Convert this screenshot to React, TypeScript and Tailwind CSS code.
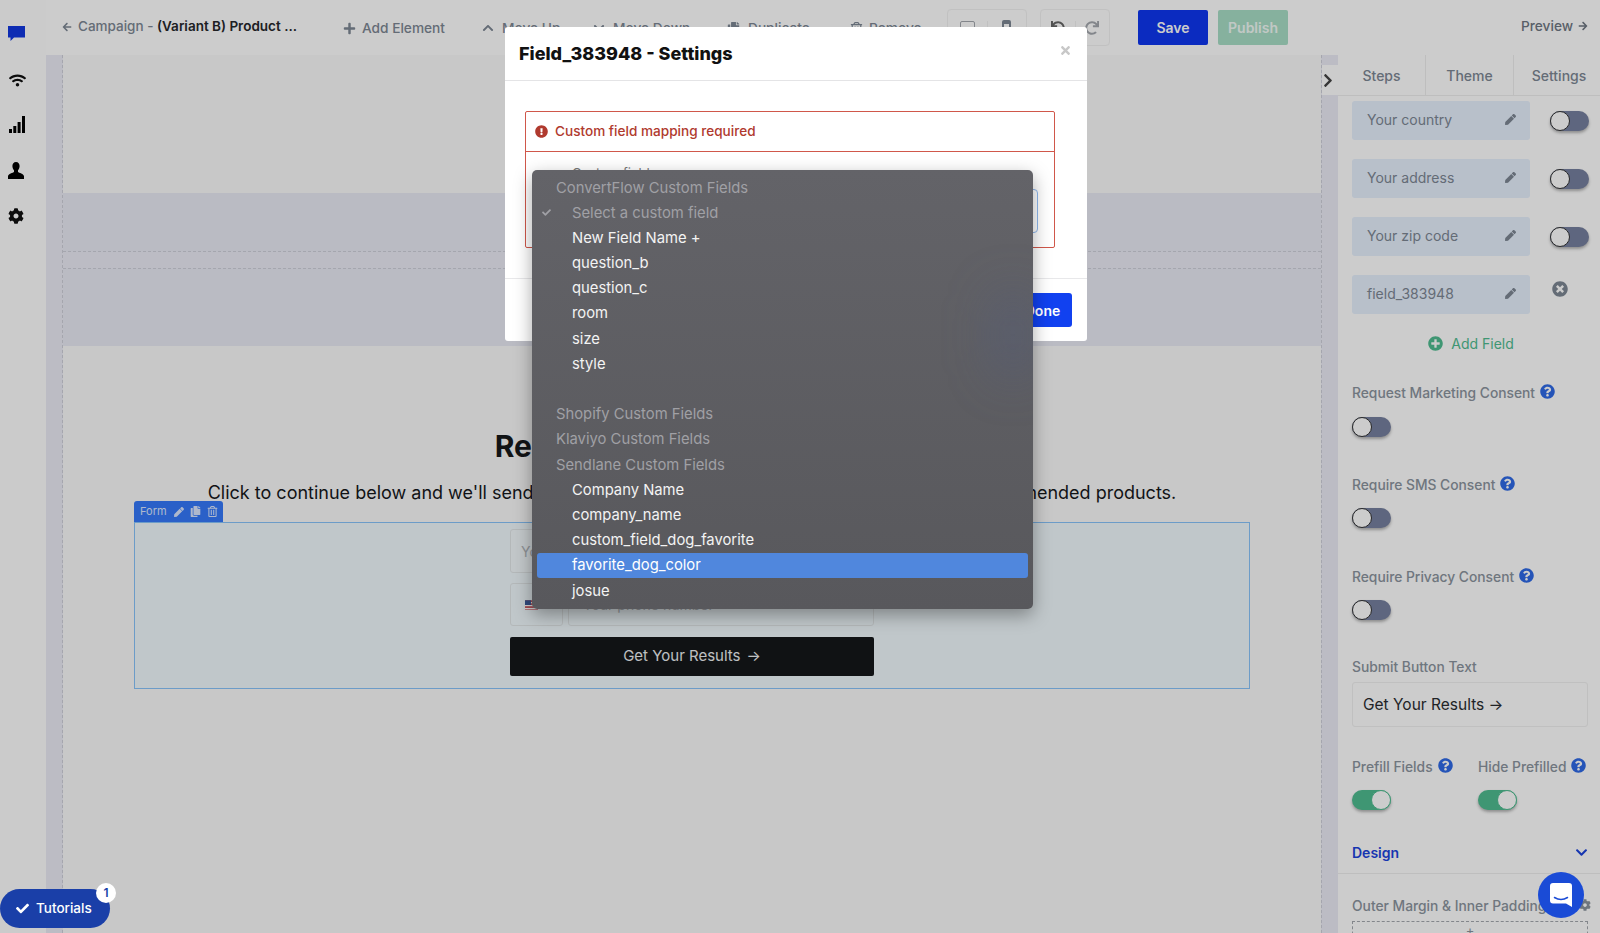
import {
  FaArrowLeft,
  FaArrowRight,
  FaCheck,
  FaChevronDown,
  FaChevronRight,
  FaChevronUp,
  FaCog,
  FaCopy,
  FaExclamationCircle,
  FaPen,
  FaPlus,
  FaPlusCircle,
  FaQuestionCircle,
  FaRedo,
  FaRegTrashAlt,
  FaTimes,
  FaTimesCircle,
  FaUndo,
  FaWifi,
} from "react-icons/fa";

const FIELDS = ["Your country", "Your address", "Your zip code", "field_383948"];

function Toggle({ on = false }: { on?: boolean }) {
  return (
    <div
      className={`relative h-5 w-[39px] shrink-0 rounded-full shadow-[0_2px_3px_rgba(0,0,0,0.3)] ${
        on ? "bg-[#4fbc90]" : "bg-[#76809f]"
      }`}
    >
      <div
        className={`absolute top-0 h-5 w-5 rounded-full bg-white ${
          on ? "right-0 border border-[#4fbc90]" : "left-0 border border-[#333]"
        }`}
      />
    </div>
  );
}

function Label({ children, help = false }: { children: React.ReactNode; help?: boolean }) {
  return (
    <div className="flex h-5 items-center whitespace-nowrap text-[13.8px] font-medium leading-5 text-[#8b949e]">
      {children}
      {help && <FaQuestionCircle className="mb-[3px] ml-[5px] shrink-0 text-[15px] text-[#2f6ae6]" />}
    </div>
  );
}

function Sidebar() {
  return (
    <div className="flex w-[46px] shrink-0 flex-col bg-[#fefefe] pl-2 pt-[26px] text-[#111]">
      <svg width="17" height="16" viewBox="0 0 17 16">
        <path d="M0 0h17v11.5H6L2.5 15v-3.5H0z" fill="#1238e0" />
      </svg>
      <FaWifi className="ml-[1px] mt-[30px] text-[17px]" />
      <svg className="ml-[1px] mt-[27px]" width="16" height="17" viewBox="0 0 16 17">
        <rect x="0" y="13" width="3" height="4" />
        <rect x="4.3" y="10" width="3" height="7" />
        <rect x="8.6" y="6" width="3" height="11" />
        <rect x="13" y="0" width="3" height="17" />
      </svg>
      <svg className="mt-[29px]" width="16" height="17" viewBox="0 0 16 17">
        <path d="M8 0c2.3 0 3.6 1.8 3.6 4 0 1.8-.8 3.4-1.6 4.3v1.6c.8.8 6 1.7 6 4.3V17H0v-2.800c0-2.600 5.200-3.500 6-4.300V8.300C5.200 7.400 4.400 5.800 4.400 4 4.400 1.800 5.700 0 8 0z" />
      </svg>
      <FaCog className="mt-[29px] text-[16px]" />
    </div>
  );
}

function TopBar() {
  return (
    <div className="flex h-[55px] shrink-0 items-center whitespace-nowrap bg-white pl-4 text-[13.7px] font-medium text-[#7d8794]">
      <div className="flex w-[234px] shrink-0 items-center pb-[2px] text-[13.5px] text-[#7d8794]">
        <FaArrowLeft className="mr-[6px] shrink-0 text-[10px]" />
        Campaign -&nbsp;<span className="font-semibold text-[#26272b]">(Variant B) Product ...</span>
      </div>
      <div className="ml-[47px] flex w-[139px] shrink-0 items-center gap-[6px] pt-[2px]">
        <FaPlus className="text-[13px]" />
        Add Element
      </div>
      <div className="flex w-[111px] shrink-0 items-center gap-2 pt-[2px]">
        <FaChevronUp className="text-[12px]" />
        Move Up
      </div>
      <div className="flex w-[134px] shrink-0 items-center gap-2 pt-[2px]">
        <FaChevronDown className="text-[12px]" />
        Move Down
      </div>
      <div className="flex w-[123px] shrink-0 items-center gap-2 pt-[2px]">
        <FaCopy className="text-[13px]" />
        Duplicate
      </div>
      <div className="flex w-[97px] shrink-0 items-center gap-[6px] pt-[2px]">
        <FaRegTrashAlt className="text-[13px]" />
        Remove
      </div>
      <div className="flex h-[37px] w-[80px] shrink-0 items-center rounded border border-[#f2f2f2]">
        <div className="flex flex-1 justify-center border-r border-[#f2f2f2]">
          <div className="h-[13px] w-[15px] rounded-[2px] border border-[#a4a8ae]" />
        </div>
        <div className="flex flex-1 justify-center">
          <div className="h-[16px] w-[9px] rounded-[2px] border-2 border-t-4 border-[#7d8794]" />
        </div>
      </div>
      <div className="ml-[13px] flex h-[37px] w-[70px] shrink-0 items-center rounded border border-[#f2f2f2]">
        <div className="flex flex-1 justify-center border-r border-[#f2f2f2] text-[14px] text-[#666]">
          <FaUndo />
        </div>
        <div className="flex flex-1 justify-center text-[14px] text-[#a4a8ae]">
          <FaRedo />
        </div>
      </div>
      <button className="ml-[28px] h-[35px] w-[70px] shrink-0 rounded-[2px] bg-[#0e36f0] text-[14px] font-semibold text-white">
        Save
      </button>
      <button className="ml-[10px] h-[35px] w-[70px] shrink-0 rounded-[2px] bg-[#a8dec6] text-[14px] font-semibold text-[#f2fbf7]">
        Publish
      </button>
      <div className="ml-[233px] flex shrink-0 items-center gap-[5px] pb-[2px] text-[#6f7782]">
        Preview
        <FaArrowRight className="text-[10px]" />
      </div>
    </div>
  );
}

function FormBlock() {
  return (
    <div className="relative mx-[71px] mt-5 flex h-[167px] flex-col items-center border border-[#88c3fb] bg-[#f0f9fd] pt-[6px]">
      <div className="absolute -left-px -top-[22px] flex h-[21px] w-[89px] items-center gap-[7px] rounded-t-[3px] bg-[#3579fb] pl-[6px] text-[11px] text-[#dbe7ff]">
        Form
        <FaPen className="text-[10px]" />
        <FaCopy className="-ml-[1px] text-[11px]" />
        <FaRegTrashAlt className="-ml-[1px] text-[11px]" />
      </div>
      <div className="flex h-11 w-[364px] items-center rounded-[3px] border border-[#e2e6e8] bg-[#f3f9fc] pl-[10px] text-[14px] text-[#b0b5b9]">
        Your email address
      </div>
      <div className="mt-[10px] flex h-[43px] w-[364px] gap-[5px]">
        <div className="flex w-[53px] items-center rounded-[3px] border border-[#e2e6e8] pl-[14px]">
          <svg width="13" height="10" viewBox="0 0 11 8">
            <rect width="11" height="8" fill="#c8565e" />
            <rect y="1.500" width="11" height="1" fill="#fff" />
            <rect y="4" width="11" height="1" fill="#fff" />
            <rect y="6.500" width="11" height="1" fill="#fff" />
            <rect width="5" height="4" fill="#3b5a9a" />
          </svg>
        </div>
        <div className="flex flex-1 items-center rounded-[3px] border border-[#e2e6e8] pl-[14px] text-[14px] text-[#b0b5b9]">
          Your phone number
        </div>
      </div>
      <button className="mt-[11px] flex h-[39px] w-[364px] items-center justify-center gap-[6px] rounded-[2px] bg-[#14171a] text-[15px] text-[#eef0f2]">
        Get Your Results
        <span className="text-[15px]">→</span>
      </button>
    </div>
  );
}

function Canvas() {
  return (
    <div className="relative flex min-w-0 flex-1 bg-[#ebecf5] px-4">
      <div className="absolute right-0 top-[10px] flex h-[30px] w-4 items-center justify-center bg-white pr-1 text-[15px] text-[#444]">
        <FaChevronRight />
      </div>
      <div className="flex w-full flex-col border-x border-dashed border-[#cfd0da]">
        <div className="h-[138px] shrink-0 bg-[#fbfbfb]" />
        <div className="h-[59px] shrink-0 border-b border-dashed border-[#cfd0da] bg-[#e9eaf4]" />
        <div className="h-4 shrink-0" />
        <div className="h-[78px] shrink-0 border-t border-dashed border-[#cfd0da] bg-[#e9eaf4]" />
        <div className="flex-1 bg-[#fbfbfb] pt-[80px]">
          <h1 className="text-center text-[30px] font-bold leading-10 text-[#16181b]">
            Results Are Ready For You!
          </h1>
          <p className="mt-[17px] whitespace-nowrap text-center text-[18px] leading-5 text-[#16181b]">
            Click to continue below and we'll send your personalized quiz results along with your top recommended products.
          </p>
          <div className="-mt-px">
            <FormBlock />
          </div>
        </div>
      </div>
    </div>
  );
}

function RightPanel() {
  return (
    <div className="relative flex w-[262px] shrink-0 flex-col overflow-hidden bg-white">
      <div className="flex h-[41px] shrink-0 border-b border-[#eeeeee] text-[14px] font-medium text-[#7d8794]">
        <div className="flex w-[88px] items-center justify-center border-r border-[#eeeeee]">Steps</div>
        <div className="flex w-[88px] items-center justify-center border-r border-[#eeeeee]">Theme</div>
        <div className="flex flex-1 items-center justify-center pl-1">Settings</div>
      </div>

      <div className="flex flex-col px-[14px]">
        <div className="mt-[5px] flex flex-col gap-[19px]">
          {FIELDS.map((field, i) => (
            <div key={field} className="flex items-center">
              <div className="flex h-[39px] w-[178px] shrink-0 items-center justify-between rounded-[3px] bg-[#e6f0fd] pb-[2px] pl-[15px] pr-[14px] text-[14px] text-[#7d8794]">
                {field}
                <FaPen className="text-[11px]" />
              </div>
              {i < 3 ? (
                <div className="ml-5">
                  <Toggle />
                </div>
              ) : (
                <FaTimesCircle className="mb-[12px] ml-[22px] shrink-0 text-[16px] text-[#7d8794]" />
              )}
            </div>
          ))}
        </div>

        <div className="mt-5 flex h-5 items-center justify-center gap-2 pb-[2px] pl-[4px] text-[14px] text-[#4fbc90]">
          <FaPlusCircle className="text-[15px]" />
          Add Field
        </div>

        <div className="mt-[29px]">
          <Label help>Request Marketing Consent</Label>
        </div>
        <div className="mt-[14px]">
          <Toggle />
        </div>

        <div className="mt-[38px]">
          <Label help>Require SMS Consent</Label>
        </div>
        <div className="mt-[13px]">
          <Toggle />
        </div>

        <div className="mt-[39px]">
          <Label help>Require Privacy Consent</Label>
        </div>
        <div className="mt-[13px]">
          <Toggle />
        </div>

        <div className="mt-[37px]">
          <Label>Submit Button Text</Label>
        </div>
        <div className="mt-[5px] flex h-[45px] w-[236px] items-center rounded-[3px] border border-[#f0f0f0] pl-[10px] text-[15.5px] text-[#2a2c30]">
          Get Your Results →
        </div>

        <div className="mt-[30px] flex">
          <div className="w-[126px] shrink-0">
            <Label help>Prefill Fields</Label>
            <div className="mt-[13px]">
              <Toggle on />
            </div>
          </div>
          <div className="shrink-0">
            <Label help>Hide Prefilled</Label>
            <div className="mt-[13px]">
              <Toggle on />
            </div>
          </div>
        </div>

        <div className="mt-[32px] flex h-5 items-center justify-between text-[14px] font-semibold text-[#1c43dd]">
          Design
          <FaChevronDown className="-mr-[2px] text-[13px]" />
        </div>
      </div>

      <div className="mt-[11px] border-t border-[#eeeeee] px-[14px]">
        <div className="mt-[22px]">
          <Label>Outer Margin &amp; Inner Padding</Label>
        </div>
        <div className="mt-[5px] flex h-10 w-[236px] justify-center border border-dashed border-[#a4a8ae] text-[13px] leading-4 text-[#8b949e]">
          +
        </div>
      </div>
      <FaCog className="absolute left-[241px] top-[844px] text-[12px] text-[#8b949e]" />
    </div>
  );
}

function CustomFieldMenu() {
  const Group = ({ children }: { children: React.ReactNode }) => (
    <div className="flex h-[25.2px] items-center pl-[24px] text-[#a0a0a5]">{children}</div>
  );
  const Option = ({ children }: { children: React.ReactNode }) => (
    <div className="flex h-[25.2px] items-center pl-[40px] text-[#f3f3f3]">{children}</div>
  );

  return (
    <div className="absolute left-[532px] top-[170px] z-30 h-[439px] w-[501px] overflow-hidden rounded-[5px] bg-gradient-to-b from-[#636368] to-[#58585c] pt-[5px] text-[14.8px] shadow-[0_6px_18px_rgba(0,0,0,0.35)]">
      <div className="absolute right-0 top-[120px] h-[90px] w-[40px] rounded-full bg-[#4a5a8c]/30 blur-xl" />
      <div className="relative">
        <Group>ConvertFlow Custom Fields</Group>
        <div className="relative flex h-[25.2px] items-center pl-[40px] text-[#a0a0a5]">
          <FaCheck className="absolute left-[10px] text-[9px]" />
          Select a custom field
        </div>
        <Option>New Field Name +</Option>
        <Option>question_b</Option>
        <Option>question_c</Option>
        <Option>room</Option>
        <Option>size</Option>
        <Option>style</Option>
        <div className="h-[25.2px]" />
        <Group>Shopify Custom Fields</Group>
        <Group>Klaviyo Custom Fields</Group>
        <Group>Sendlane Custom Fields</Group>
        <Option>Company Name</Option>
        <Option>company_name</Option>
        <Option>custom_field_dog_favorite</Option>
        <div className="mx-[5px] flex h-[25.2px] items-center rounded-[3px] bg-[#5087dd] pl-[35px] text-white">
          favorite_dog_color
        </div>
        <Option>josue</Option>
      </div>
    </div>
  );
}

function SettingsModal() {
  return (
    <div className="absolute left-[505px] top-[27px] z-20 flex h-[314px] w-[582px] flex-col rounded-[3px] bg-white">
      <div className="flex h-[54px] shrink-0 items-center justify-between border-b border-[#e4e4e6] pl-[14px] pr-[15px]">
        <h2 className="text-[18px] font-extrabold text-[#111]">Field_383948 - Settings</h2>
        <FaTimes className="mb-[6px] text-[13px] text-[#c8c8c8]" />
      </div>
      <div className="flex-1 pl-5 pt-[30px]">
        <div className="h-[137px] w-[530px] rounded-[2px] border border-[#d0574a]">
          <div className="flex h-[40px] items-center gap-[7px] border-b border-[#d0574a] pl-[9px] text-[13.6px] font-medium text-[#b03a2e]">
            <FaExclamationCircle className="text-[13px]" />
            Custom field mapping required
          </div>
          <div className="px-4">
            <div className="pl-[30px] pt-[13px] text-[13px] leading-[16px] text-[#777]">Custom field</div>
            <div className="ml-[4px] mt-[8px] flex h-[44px] items-center justify-end rounded-[4px] border border-[#8fb8ee] pr-[4px] text-[8px] text-[#666]">
              <FaChevronDown />
            </div>
          </div>
        </div>
      </div>
      <div className="flex h-[63px] shrink-0 justify-end border-t border-[#e8e8ea] pr-[15px] pt-[14px]">
        <button className="h-[34px] w-[59px] rounded-[3px] bg-[#1141f0] text-[14px] font-semibold text-white">
          Done
        </button>
      </div>
    </div>
  );
}

export default function App() {
  return (
    <div className="relative flex h-[933px] w-full overflow-hidden bg-white font-['Inter',sans-serif]">
      <Sidebar />
      <div className="flex min-w-0 flex-1 flex-col">
        <TopBar />
        <div className="flex min-h-0 flex-1">
          <Canvas />
          <RightPanel />
        </div>
      </div>

      {/* dim layer behind the modal */}
      <div className="absolute inset-0 z-10 bg-black/20" />

      <SettingsModal />
      <CustomFieldMenu />

      <div className="absolute bottom-[5px] left-0 z-20 flex h-[39px] w-[110px] items-center gap-[7px] rounded-full bg-[#1a3fa8] pl-4 text-[13.5px] font-medium text-white">
        <FaCheck className="text-[13px]" />
        Tutorials
        <div className="absolute -top-[6px] right-[-6px] flex h-5 w-5 items-center justify-center rounded-full bg-white text-[12px] font-semibold text-[#1a3fa8]">
          1
        </div>
      </div>

      <div className="absolute bottom-[15px] right-[16px] z-20 flex h-[46px] w-[46px] items-center justify-center rounded-full bg-[#1a4bd6]">
        <svg width="22" height="24" viewBox="0 0 22 24">
          <path d="M3 0h16a3 3 0 0 1 3 3v21l-6-3.500H3a3 3 0 0 1-3-3V3a3 3 0 0 1 3-3z" fill="#fff" />
          <path d="M4.500 14.500c4 2.500 9 2.500 13 0" stroke="#1a4bd6" strokeWidth="1.500" fill="none" strokeLinecap="round" />
        </svg>
      </div>
    </div>
  );
}
